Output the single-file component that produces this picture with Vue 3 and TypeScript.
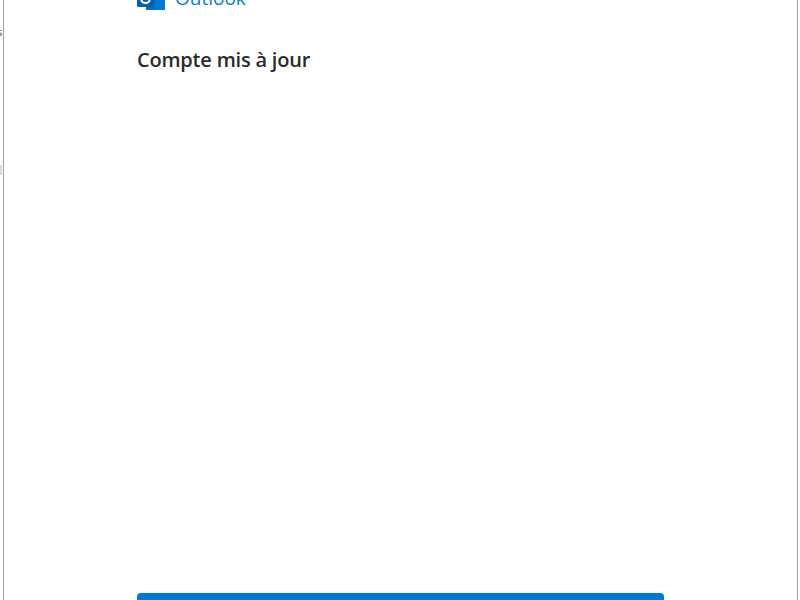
<script setup lang="ts">
const title: string = "Compte mis à jour";
</script>

<template>
  <div class="page">
    <div class="gutter">
      <span class="crumb">s</span>
      <span class="mark"></span>
    </div>
    <main class="window">
      <div class="content">
        <header class="brand">
          <svg class="logo" width="28" height="28" viewBox="0 0 28 28" aria-hidden="true">
            <rect x="9" y="2" width="19" height="24" fill="#0f6cbd" />
            <rect x="18" y="2" width="10" height="12" fill="#28a8ea" />
            <rect x="9" y="2" width="9" height="12" fill="#0078d4" />
            <rect x="18" y="14" width="10" height="12" fill="#0078d4" />
            <rect x="0" y="6" width="17" height="17" rx="1.5" fill="#0a5ea8" />
            <circle cx="8.5" cy="14.5" r="4.5" fill="none" stroke="#fff" stroke-width="2" />
          </svg>
          <span class="name">Outlook</span>
        </header>
        <h1 class="title">{{ title }}</h1>
        <div class="spacer"></div>
        <button class="action" type="button"></button>
      </div>
    </main>
  </div>
</template>

<style>
html,
body {
  margin: 0;
  background: #fff;
  overflow: hidden;
}
</style>

<style scoped>
.page {
  display: flex;
  width: 800px;
  height: 600px;
  overflow: hidden;
  background: #fff;
  font-family: "Open Sans", "Liberation Sans", sans-serif;
}
.gutter {
  width: 3px;
  flex: none;
  overflow: hidden;
  display: flex;
  flex-direction: column;
  background: #fff;
}
.crumb {
  margin-top: 25px;
  margin-left: -3px;
  font-size: 11px;
  line-height: 14px;
  color: #444;
}
.mark {
  width: 2px;
  height: 10px;
  margin-top: 126px;
  background: #d8d8d8;
}
.window {
  width: 795px;
  flex: none;
  height: 600px;
  box-sizing: border-box;
  border-left: 1px solid #a0a0a0;
  border-right: 1px solid #a0a0a0;
  background: #fff;
}
.content {
  display: flex;
  flex-direction: column;
  width: 527px;
  height: 600px;
  margin-left: 133px;
}
.brand {
  display: flex;
  align-items: center;
  gap: 10px;
  height: 28px;
  margin-top: -16px;
  flex: none;
}
.logo {
  flex: none;
}
.name {
  font-family: "Open Sans", "Liberation Sans", sans-serif;
  font-size: 19px;
  line-height: 28px;
  color: #0f7bc4;
}
.title {
  margin: 34px 0 0;
  font-size: 20px;
  line-height: 28px;
  font-weight: 600;
  color: #2b2b2b;
  letter-spacing: -0.2px;
}
.spacer {
  flex: 1;
}
.action {
  display: block;
  flex: none;
  width: 527px;
  height: 40px;
  margin-bottom: -33px;
  padding: 0;
  border: none;
  border-radius: 4px;
  background: #0078d4;
}
</style>
